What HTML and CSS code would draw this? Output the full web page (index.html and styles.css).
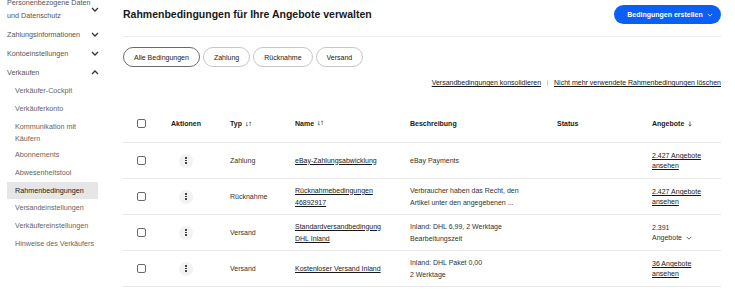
FILE: index.html
```html
<!DOCTYPE html>
<html lang="de">
<head>
<meta charset="utf-8">
<title>Rahmenbedingungen</title>
<link rel="stylesheet" href="styles.css">
</head>
<body>
<div class="page">
  <nav class="sidebar">
    <div class="top-item"><span class="two">Personenbezogene Daten<br>und Datenschutz</span><svg class="chev" viewBox="0 0 8 5"><path d="M1 1l3 3 3-3"/></svg></div>
    <div class="top-item"><span>Zahlungsinformationen</span><svg class="chev" viewBox="0 0 8 5"><path d="M1 1l3 3 3-3"/></svg></div>
    <div class="top-item"><span>Kontoeinstellungen</span><svg class="chev" viewBox="0 0 8 5"><path d="M1 1l3 3 3-3"/></svg></div>
    <div class="top-item"><span>Verkaufen</span><svg class="chev" viewBox="0 0 8 5"><path d="M1 4l3-3 3 3"/></svg></div>
    <ul class="sub">
      <li>Verkäufer-Cockpit</li>
      <li>Verkäuferkonto</li>
      <li class="two-line">Kommunikation mit<br>Käufern</li>
      <li>Abonnements</li>
      <li>Abwesenheitstool</li>
      <li class="active">Rahmenbedingungen</li>
      <li>Versandeinstellungen</li>
      <li>Verkäufereinstellungen</li>
      <li>Hinweise des Verkäufers</li>
    </ul>
  </nav>
  <main class="main">
    <header class="head">
      <h1>Rahmenbedingungen für Ihre Angebote verwalten</h1>
      <button class="primary">Bedingungen erstellen <svg class="bchev" viewBox="0 0 8 5"><path d="M1 1l3 3 3-3"/></svg></button>
    </header>
    <div class="pills">
      <span class="pill selected">Alle Bedingungen</span>
      <span class="pill">Zahlung</span>
      <span class="pill">Rücknahme</span>
      <span class="pill">Versand</span>
    </div>
    <div class="links">
      <a href="#">Versandbedingungen konsolidieren</a>
      <span class="sep"></span>
      <a href="#">Nicht mehr verwendete Rahmenbedingungen löschen</a>
    </div>
    <div class="table">
      <div class="row hrow">
        <div class="c1"><span class="cb"></span></div>
        <div class="c2">Aktionen</div>
        <div class="c3">Typ <svg class="sort" viewBox="0 0 8 7"><path d="M2 1v5M0.8 4.6L2 6l1.2-1.4M6 6V1M4.8 2.4L6 1l1.2 1.4"/></svg></div>
        <div class="c4">Name <svg class="sort" viewBox="0 0 8 7"><path d="M2 1v5M0.8 4.6L2 6l1.2-1.4M6 6V1M4.8 2.4L6 1l1.2 1.4"/></svg></div>
        <div class="c5">Beschreibung</div>
        <div class="c6">Status</div>
        <div class="c7">Angebote <svg class="sort1" viewBox="0 0 6 7"><path d="M3 0.5v5.5M1.2 4.2L3 6l1.8-1.8"/></svg></div>
      </div>
      <div class="row">
        <div class="c1"><span class="cb"></span></div>
        <div class="c2"><span class="kebab"><i></i><i></i><i></i></span></div>
        <div class="c3">Zahlung</div>
        <div class="c4"><a href="#">eBay-Zahlungsabwicklung</a></div>
        <div class="c5">eBay Payments</div>
        <div class="c6"></div>
        <div class="c7"><a href="#" class="count">2.427 Angebote ansehen</a></div>
      </div>
      <div class="row">
        <div class="c1"><span class="cb"></span></div>
        <div class="c2"><span class="kebab"><i></i><i></i><i></i></span></div>
        <div class="c3">Rücknahme</div>
        <div class="c4"><a href="#">Rücknahmebedingungen<br>46892917</a></div>
        <div class="c5">Verbraucher haben das Recht, den<br>Artikel unter den angegebenen ...</div>
        <div class="c6"></div>
        <div class="c7"><a href="#" class="count">2.427 Angebote ansehen</a></div>
      </div>
      <div class="row">
        <div class="c1"><span class="cb"></span></div>
        <div class="c2"><span class="kebab"><i></i><i></i><i></i></span></div>
        <div class="c3">Versand</div>
        <div class="c4"><a href="#">Standardversandbedingung<br>DHL Inland</a></div>
        <div class="c5">Inland: DHL 6,99, 2 Werktage<br>Bearbeitungszeit</div>
        <div class="c6"></div>
        <div class="c7"><span class="count">2.391<br>Angebote <svg class="dchev" viewBox="0 0 8 5"><path d="M1 1l3 3 3-3"/></svg></span></div>
      </div>
      <div class="row">
        <div class="c1"><span class="cb"></span></div>
        <div class="c2"><span class="kebab"><i></i><i></i><i></i></span></div>
        <div class="c3">Versand</div>
        <div class="c4"><a href="#">Kostenloser Versand Inland</a></div>
        <div class="c5">Inland: DHL Paket 0,00<br>2 Werktage</div>
        <div class="c6"></div>
        <div class="c7"><a href="#" class="count">36 Angebote ansehen</a></div>
      </div>
    </div>
  </main>
</div>
</body>
</html>
```

FILE: styles.css
```css
* { box-sizing: border-box; }
html, body { margin: 0; padding: 0; background: #fff; }
body {
  font-family: "Liberation Sans", Arial, sans-serif;
  color: #191919;
  overflow: hidden;
  height: 294px;
}
.page {
  display: flex;
  align-items: flex-start;
}
.sidebar {
  width: 123px;
  flex: none;
  padding-left: 7px;
  margin-top: -4px;
  font-size: 7.2px;
  color: #555;
}
.top-item {
  width: 92px;
  display: flex;
  justify-content: space-between;
  align-items: center;
  min-height: 19px;
  line-height: 13px;
}
.top-item:first-child { padding-bottom: 3px; }
.chev {
  width: 8px;
  height: 5px;
  fill: none;
  stroke: #333;
  stroke-width: 1.3;
}
.sub {
  list-style: none;
  margin: 0;
  padding: 0;
}
.sub li {
  width: 91px;
  padding: 3px 0 3px 8px;
  line-height: 12px;
  color: #666;
}
.sub li.two-line { padding-bottom: 1px; }
.sub li.active {
  background: #e6e6e6;
  color: #191919;
  padding-top: 2.5px;
  padding-bottom: 2.5px;
}
.main {
  flex: 1;
  padding: 5px 14px 0 0;
  font-size: 7px;
}
.head {
  display: flex;
  justify-content: space-between;
  align-items: center;
  padding-bottom: 12px;
  border-bottom: 1px solid #ececec;
}
h1 {
  margin: 0;
  font-size: 10.5px;
  font-weight: bold;
  line-height: 19px;
}
.primary {
  font-family: inherit;
  font-size: 7px;
  font-weight: bold;
  color: #fff;
  background: #0c5ff4;
  border: none;
  border-radius: 10px;
  height: 19px;
  width: 107px;
  padding: 0 0 0 5px;
  display: flex;
  align-items: center;
  justify-content: center;
  gap: 4px;
}
.bchev {
  width: 6px;
  height: 4px;
  fill: none;
  stroke: #fff;
  stroke-width: 1;
}
.pills {
  display: flex;
  gap: 3px;
  margin-top: 10px;
}
.pill {
  height: 20px;
  border: 1px solid #c7c7c7;
  border-radius: 10px;
  display: flex;
  align-items: center;
  padding: 0 10px;
  font-size: 7px;
  color: #191919;
}
.pill.selected { border-color: #6b6b6b; }
.links {
  display: flex;
  justify-content: flex-end;
  align-items: center;
  gap: 6px;
  margin-top: 11px;
  line-height: 9px;
}
.links a { color: #191919; text-decoration: underline; }
.sep {
  width: 1px;
  height: 6px;
  background: #d0d0d0;
}
.table { margin-top: 18px; }
.row {
  display: grid;
  grid-template-columns: 37px 52px 83px 115px 147px 95px 1fr;
  align-items: center;
  min-height: 36px;
  border-bottom: 1px solid #e8e8e8;
  color: #333;
}
.hrow {
  min-height: 38px;
  font-weight: bold;
  color: #191919;
}
.c1 { padding-left: 14px; display: flex; }
.c2 { display: flex; justify-content: center; }
.c3 { padding-left: 18px; }
.c5 { line-height: 11.5px; }
.c4 { line-height: 12px; }
.c4 a, .c7 a { color: #191919; text-decoration: underline; }
.cb {
  width: 9px;
  height: 9px;
  border: 1px solid #6a6a6a;
  border-radius: 2px;
  background: #fff;
}
.kebab {
  width: 14px;
  height: 14px;
  border-radius: 50%;
  background: #f2f2f2;
  display: flex;
  flex-direction: column;
  align-items: center;
  justify-content: center;
  gap: 1px;
}
.kebab i {
  width: 1.6px;
  height: 1.6px;
  border-radius: 50%;
  background: #222;
}
.sort {
  width: 7px;
  height: 6px;
  fill: none;
  stroke: #555;
  stroke-width: 0.7;
  vertical-align: -0.5px;
  margin-left: 1px;
}
.sort1 {
  width: 6px;
  height: 6px;
  fill: none;
  stroke: #333;
  stroke-width: 0.8;
  vertical-align: -0.5px;
  margin-left: 1px;
}
.count {
  display: inline-block;
  max-width: 55px;
  line-height: 9.5px;
}
.dchev {
  width: 6px;
  height: 4px;
  fill: none;
  stroke: #333;
  stroke-width: 1;
  margin-left: 2px;
}
```
